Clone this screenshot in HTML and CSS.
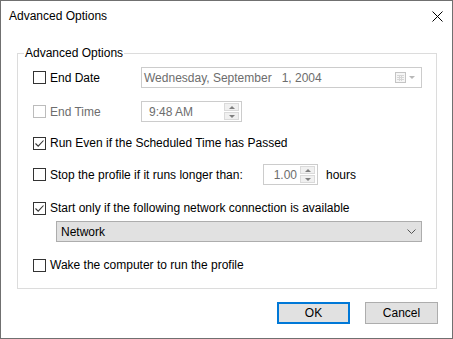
FILE: index.html
```html
<!DOCTYPE html>
<html lang="en">

<head>
  <meta charset="UTF-8">
  <meta name="viewport" content="width=device-width, initial-scale=1.0">
  <title>Advanced Options</title>
  <link rel="stylesheet" href="styles.css">
</head>

<body>
  <div class="window">
    <div class="titlebar">
      <span class="title">Advanced Options</span>
      <svg class="close" width="11" height="11" viewBox="0 0 11 11">
        <path d="M0.5 0.5 L10.5 10.5 M10.5 0.5 L0.5 10.5" stroke="#000" stroke-width="1" fill="none" />
      </svg>
    </div>

    <div class="client">
      <div class="group">
        <span class="group-title">Advanced Options</span>

        <!-- end date -->
        <div class="row row-1">
          <label class="check check-short"><span class="box"></span>End Date</label>
          <div class="field date-field">
            <span class="value">Wednesday, September   1, 2004</span>
            <svg class="cal" width="20" height="11" viewBox="0 0 20 11">
              <rect x="0.5" y="0.5" width="10" height="10" fill="#f6f6f6" stroke="#c4c4c4" />
              <path d="M2 3.5 H9 M2 5.5 H9 M2 7.5 H9 M4.5 3 V9 M6.5 3 V9" stroke="#d6d6d6" />
              <path d="M14 4 H20 L17 7 Z" fill="#b8b8b8" />
            </svg>
          </div>
        </div>

        <!-- end time -->
        <div class="row row-2">
          <label class="check check-short disabled"><span class="box"></span>End Time</label>
          <div class="field time-field">
            <span class="value">9:48 AM</span>
            <div class="spin">
              <span class="spin-btn"><i class="up"></i></span>
              <span class="spin-btn"><i class="down"></i></span>
            </div>
          </div>
        </div>

        <div class="row row-3">
          <label class="check"><span class="box checked">
            <svg width="11" height="11" viewBox="0 0 11 11"><path d="M1.5 5.5 L4.2 8.2 L9.5 2.5" stroke="#333" stroke-width="1.1" fill="none" /></svg>
          </span>Run Even if the Scheduled Time has Passed</label>
        </div>

        <div class="row row-4">
          <label class="check check-long"><span class="box"></span>Stop the profile if it runs longer than:</label>
          <div class="field num-field">
            <span class="value">1.00</span>
            <div class="spin">
              <span class="spin-btn"><i class="up"></i></span>
              <span class="spin-btn"><i class="down"></i></span>
            </div>
          </div>
          <span class="unit">hours</span>
        </div>

        <div class="row row-5">
          <label class="check"><span class="box checked">
            <svg width="11" height="11" viewBox="0 0 11 11"><path d="M1.5 5.5 L4.2 8.2 L9.5 2.5" stroke="#333" stroke-width="1.1" fill="none" /></svg>
          </span>Start only if the following network connection is available</label>
        </div>

        <div class="row row-6">
          <div class="combo">
            <span>Network</span>
            <svg width="9" height="5" viewBox="0 0 9 5"><path d="M0.5 0.5 L4.5 4.5 L8.5 0.5" stroke="#555" fill="none" /></svg>
          </div>
        </div>

        <div class="row row-7">
          <label class="check"><span class="box"></span>Wake the computer to run the profile</label>
        </div>
      </div>

      <div class="buttons">
        <button class="btn btn-default">OK</button>
        <button class="btn">Cancel</button>
      </div>
    </div>
  </div>
</body>

</html>
```

FILE: styles.css
```css
* {
  box-sizing: border-box;
}

body {
  margin: 0;
  font-family: "Liberation Sans", Arial, sans-serif;
  font-size: 12px;
  color: #000;
  background: #fff;
}

.window {
  width: 453px;
  height: 339px;
  border: 1px solid #707070;
  background: #fff;
  display: flex;
  flex-direction: column;
}

.titlebar {
  height: 30px;
  display: flex;
  align-items: center;
  justify-content: space-between;
  padding: 0 9px 0 8px;
}

.client {
  flex: 1;
  padding: 22px 15px 0 16px;
  display: flex;
  flex-direction: column;
}

.group {
  height: 236px;
  border: 1px solid #dcdcdc;
  display: flex;
  flex-direction: column;
  padding: 0 14px 0 15px;
}

.group-title {
  align-self: flex-start;
  margin: -8px 0 0 -9px;
  padding: 0 1px;
  line-height: 14px;
  background: #fff;
}

.row {
  display: flex;
  align-items: center;
  flex: none;
}

.row-1 { margin-top: 7px; height: 21px; }
.row-2 { margin-top: 13px; height: 21px; }
.row-3 { margin-top: 11px; height: 20px; }
.row-4 { margin-top: 11px; height: 21px; }
.row-5 { margin-top: 13px; height: 20px; }
.row-6 { margin-top: 3px; height: 21px; }
.row-7 { margin-top: 13px; height: 20px; }

/* checkboxes */
.check {
  display: flex;
  align-items: center;
  flex: none;
}

.check-short {
  width: 108px;
}

.check-long {
  width: 230px;
}

.check .box {
  width: 13px;
  height: 13px;
  border: 1px solid #333;
  background: #fff;
  margin-right: 4px;
  display: flex;
  align-items: center;
  justify-content: center;
}

.check.disabled {
  color: #6d6d6d;
}

.check.disabled .box {
  border-color: #bcbcbc;
}

/* input fields */
.field {
  height: 21px;
  border: 1px solid #cccccc;
  background: #fff;
  display: flex;
  align-items: center;
  color: #6d6d6d;
}

.date-field {
  flex: 1;
  padding: 0 6px 0 2px;
}

.date-field .value {
  flex: 1;
  white-space: pre;
}

.time-field {
  width: 101px;
  padding: 0 2px 0 7px;
}

.time-field .value {
  flex: 1;
}

.num-field {
  width: 55px;
  padding: 0 2px 0 0;
}

.num-field .value {
  flex: 1;
  text-align: right;
  padding-right: 3px;
}

.spin {
  width: 15px;
  height: 17px;
  display: flex;
  flex-direction: column;
  gap: 1px;
}

.spin-btn {
  flex: 1;
  background: #f0f0f0;
  border: 1px solid #dadada;
  display: flex;
  align-items: center;
  justify-content: center;
}

.spin-btn i {
  width: 0;
  height: 0;
  border-left: 3px solid transparent;
  border-right: 3px solid transparent;
}

.spin-btn .up {
  border-bottom: 3px solid #808080;
}

.spin-btn .down {
  border-top: 3px solid #808080;
}

.unit {
  margin-left: 8px;
}

/* combo box */
.combo {
  flex: 1;
  height: 21px;
  margin-left: 23px;
  background: #e1e1e1;
  border: 1px solid #adadad;
  display: flex;
  align-items: center;
  justify-content: space-between;
  padding: 0 5px 0 4px;
}

/* buttons */
.buttons {
  display: flex;
  justify-content: flex-end;
  gap: 15px;
  margin: 13px -1px 0 0;
}

.btn {
  width: 73px;
  height: 22px;
  background: #e1e1e1;
  border: 1px solid #adadad;
  font-family: inherit;
  font-size: 12px;
  color: #000;
  padding: 0;
}

.btn-default {
  border: 2px solid #0078d7;
}
```
